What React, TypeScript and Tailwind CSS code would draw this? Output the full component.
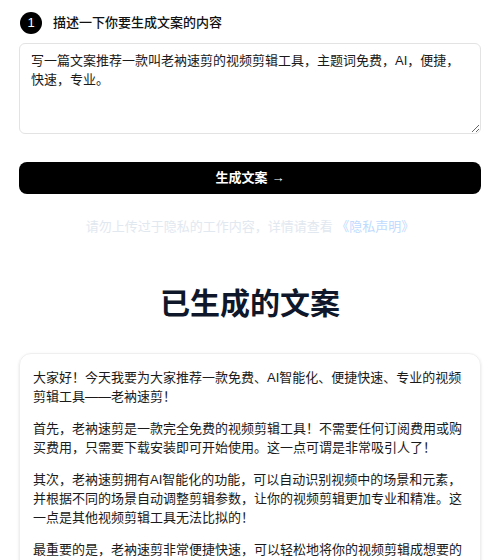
import { useState } from "react";

const FONT = { fontFamily: '"Liberation Sans", "Noto Sans CJK SC", sans-serif' };

const paragraphs = [
  "大家好！今天我要为大家推荐一款免费、AI智能化、便捷快速、专业的视频剪辑工具——老衲速剪！",
  "首先，老衲速剪是一款完全免费的视频剪辑工具！不需要任何订阅费用或购买费用，只需要下载安装即可开始使用。这一点可谓是非常吸引人了！",
  "其次，老衲速剪拥有AI智能化的功能，可以自动识别视频中的场景和元素，并根据不同的场景自动调整剪辑参数，让你的视频剪辑更加专业和精准。这一点是其他视频剪辑工具无法比拟的！",
  "最重要的是，老衲速剪非常便捷快速，可以轻松地将你的视频剪辑成想要的效果，无论是新手还是专业人士，都能快速上手，轻松完成视频创作！",
  "总之，老衲速剪是一款免费、AI智能化、便捷快速、专业的视频剪辑工具，赶快下载体验吧！",
];

export default function App() {
  const [prompt, setPrompt] = useState(
    "写一篇文案推荐一款叫老衲速剪的视频剪辑工具，主题词免费，AI，便捷，快速，专业。"
  );

  return (
    <div className="w-[500px] bg-white px-[19px] pt-[12px] pb-10" style={FONT}>
      {/* Step 1 */}
      <div className="flex items-center gap-[11px] h-[22px] pl-px">
        <div className="w-[22px] h-[22px] rounded-full bg-black text-white text-[13px] flex items-center justify-center">
          1
        </div>
        <span className="text-[13px] font-medium text-[#111111]">描述一下你要生成文案的内容</span>
      </div>

      <textarea
        value={prompt}
        onChange={(e) => setPrompt(e.target.value)}
        className="mt-[9px] block w-full h-[91px] border border-[#e3e3e3] rounded-md px-[11px] pt-[7px] text-[13px] leading-[19px] text-[#1a1a1a] outline-none"
        style={FONT}
      />

      <button className="mt-[28px] w-full h-[32px] rounded-lg bg-black text-white text-[13px] font-semibold flex items-center justify-center gap-1">
        生成文案 <span>→</span>
      </button>

      <p className="mt-[23px] text-center text-[13px] leading-[20px] text-[#e2e8f0]">
        请勿上传过于隐私的工作内容，详情请查看 <span className="text-[#bfdbfe]">《隐私声明》</span>
      </p>

      <h1 className="mt-[49px] text-center text-[30px] leading-[36px] font-bold text-[#0f172a]">已生成的文案</h1>

      <div className="mt-[31px] rounded-xl border border-[#efefef] shadow-sm pl-[13px] pr-[13px] pt-[14px] pb-[14px] flex flex-col gap-[13px]">
        {paragraphs.map((p, i) => (
          <p key={i} className="text-[13px] leading-[19px] text-[#1a1a1a]">
            {p}
          </p>
        ))}
      </div>
    </div>
  );
}
